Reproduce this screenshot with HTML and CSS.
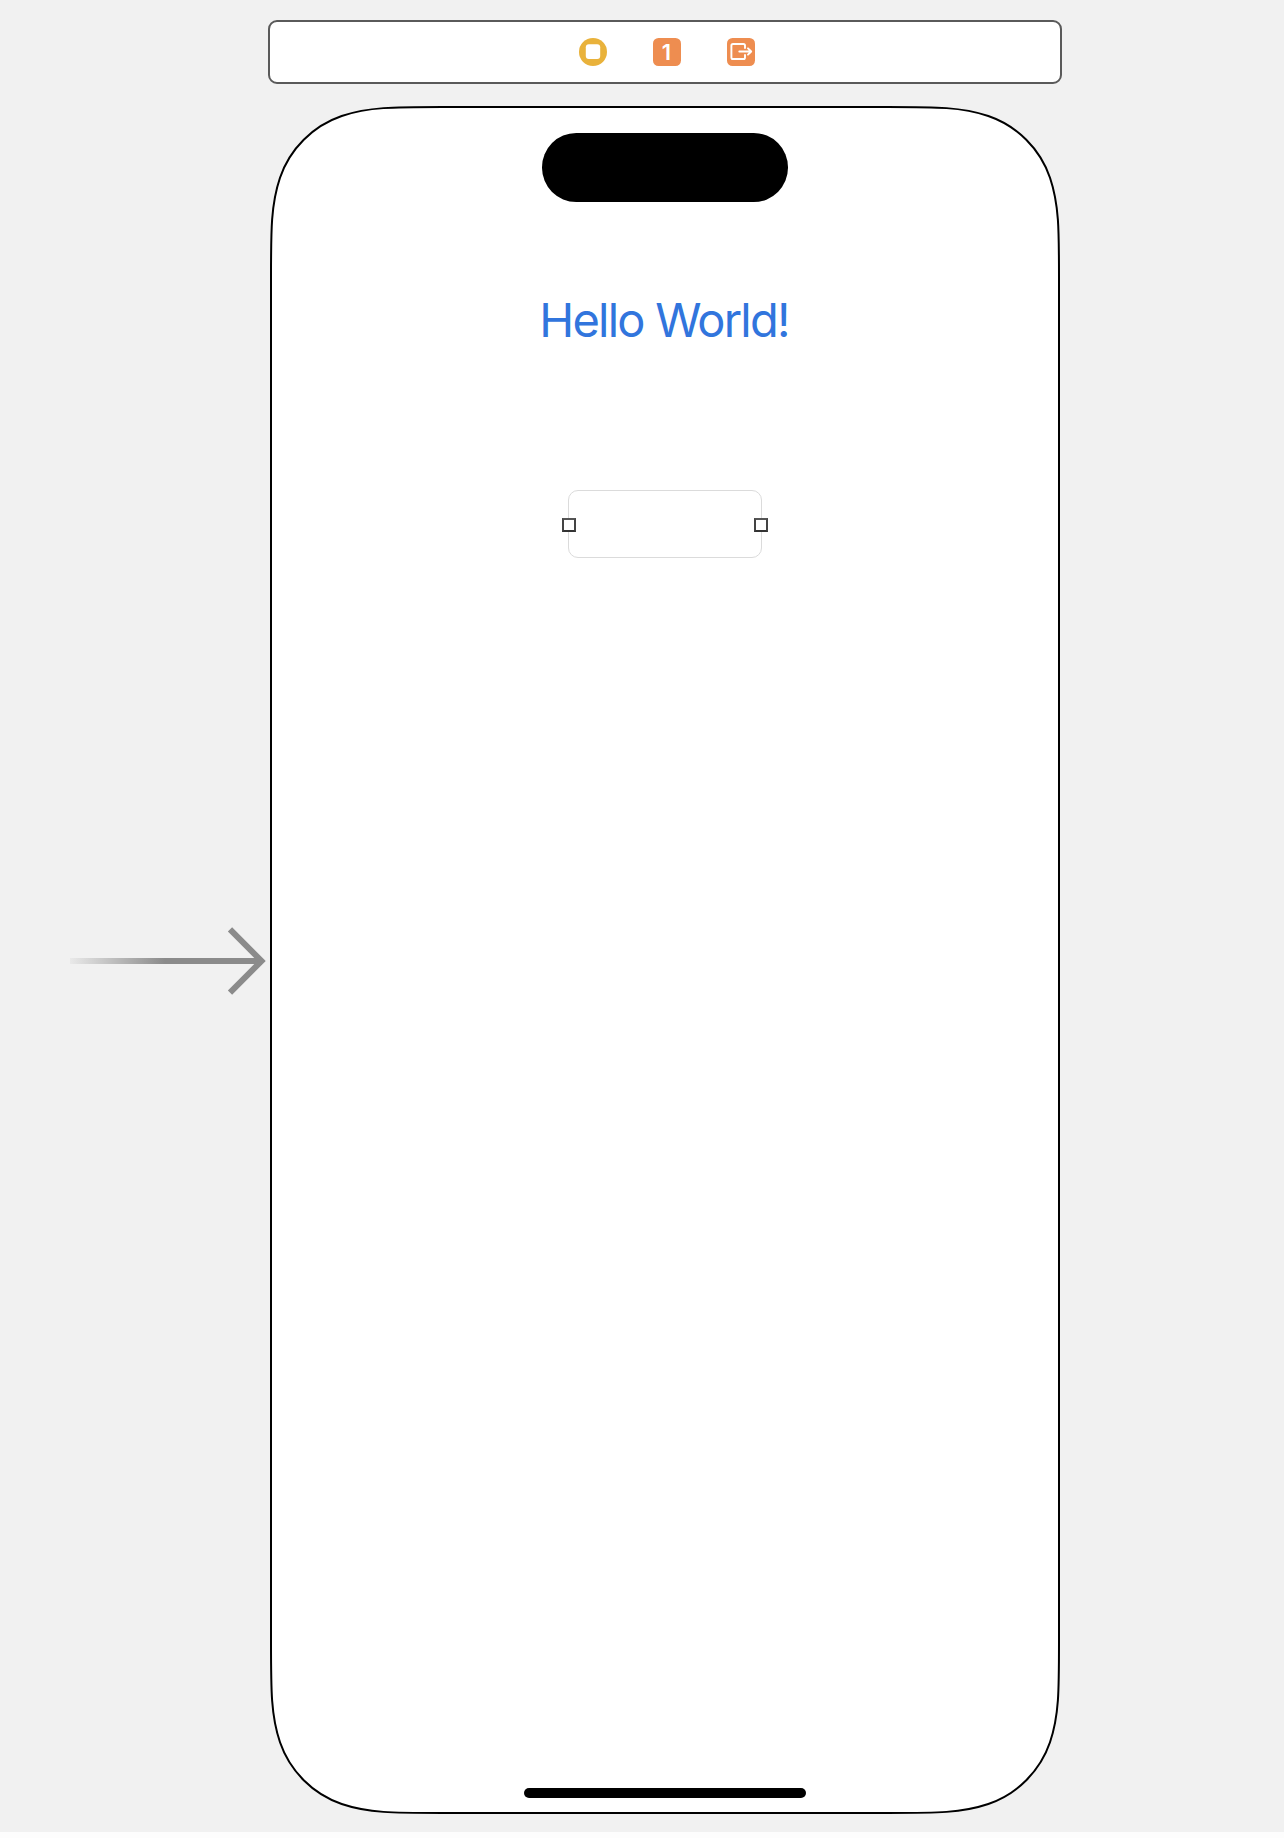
FILE: index.html
```html
<!DOCTYPE html>
<html lang="en">
<head>
<meta charset="utf-8">
<title>Main.storyboard</title>
<link rel="stylesheet" href="styles.css">
</head>
<body>
<main class="canvas">
  <header class="scene-dock">
    <svg class="dock-icon" viewBox="0 0 28 28"><circle cx="14" cy="14" r="14" fill="#e9b23b"/><rect x="6.8" y="6.3" width="14.4" height="14.8" rx="3" fill="#fff"/></svg>
    <span class="dock-icon responder">1</span>
    <svg class="dock-icon" viewBox="0 0 28 28"><rect width="28" height="28" rx="5.5" fill="#ee8d50"/><g fill="none" stroke="#fff" stroke-width="1.9" stroke-linecap="round" stroke-linejoin="round"><path d="M18 10V7.6Q18 6 16.400 6H6Q4.400 6 4.400 7.600V19.400Q4.400 21 6 21H16.400Q18 21 18 19.400V17"/><path d="M12.300 13.500H24M21 10.300L24.200 13.500L21 16.700"/></g></svg>
  </header>
  <svg class="entry-arrow" viewBox="0 0 200 70">
    <defs><linearGradient id="fade" gradientUnits="userSpaceOnUse" x1="0" y1="0" x2="95" y2="0"><stop offset="0" stop-color="#e9e9e9"/><stop offset="1" stop-color="#8b8b8b"/></linearGradient></defs>
    <rect x="0" y="32" width="192" height="6" fill="url(#fade)"/>
    <path d="M160 3.300L191.500 35L160 66.700" fill="none" stroke="#8b8b8b" stroke-width="6"/>
  </svg>
  <section class="phone">
    <svg class="phone-shape" viewBox="-1 -1 790 1708">
      <path fill="#fff" stroke="#000" stroke-width="2" d="M171 0H617C666 0 690.700 0 717.300 9C746.200 18.900 769.100 41.800 779 70.700C788 97.300 788 122 788 171V1535C788 1584 788 1608.700 779 1635.300C769.100 1664.200 746.200 1687.100 717.300 1697C690.700 1706 666 1706 617 1706H171C122 1706 97.300 1706 70.700 1697C41.800 1687.100 18.900 1664.200 9 1635.300C0 1608.700 0 1584 0 1535V171C0 122 0 97.300 9 70.700C18.900 41.800 41.800 18.900 70.700 9C97.300 0 122 0 171 0Z"/>
    </svg>
    <div class="island"></div>
    <h1 class="title">Hello World!</h1>
    <div class="field"><i class="handle"></i><i class="handle"></i></div>
    <div class="home-bar"></div>
  </section>
</main>
</body>
</html>
```
FILE: styles.css
```css
* { box-sizing: border-box; }

body {
  margin: 0;
  background: #fdfdfd;
  font-family: Inter, "Liberation Sans", sans-serif;
}

.canvas {
  display: grid;
  grid-template-columns: 270px 790px;
  grid-template-rows: 64px 1708px;
  row-gap: 22px;
  align-content: start;
  isolation: isolate;
  height: 1832px;
  padding-top: 20px;
  background: #f1f1f1;
}

.scene-dock {
  grid-column: 2;
  display: flex;
  align-items: center;
  justify-content: center;
  gap: 46px;
  width: 794px;
  margin-left: -2px;
  padding-left: 4px;
  border: 2px solid #5a5a5a;
  border-radius: 9px;
  background: #fff;
}

.dock-icon {
  display: block;
  width: 28px;
  height: 28px;
}

.responder {
  padding-right: 1px;
  border-radius: 5.5px;
  background: #ee8d50;
  color: #fff;
  font-size: 22px;
  font-weight: 600;
  line-height: 28px;
  text-align: center;
}

.entry-arrow {
  grid-column: 1;
  grid-row: 2;
  width: 200px;
  height: 70px;
  margin: 820px 0 0 70px;
}

.phone {
  grid-column: 2;
  grid-row: 2;
  position: relative;
  display: flex;
  flex-direction: column;
  align-items: center;
  padding: 27px 0 16px;
}

.phone-shape {
  position: absolute;
  inset: 0;
  z-index: -1;
  width: 790px;
  height: 1708px;
}

.island {
  width: 245.400px;
  height: 68.500px;
  border-radius: 34.250px;
  background: #000;
}

.title {
  margin: 88.500px 2px 0 0;
  color: #3175dd;
  font-size: 47px;
  font-weight: 400;
  line-height: 60px;
  letter-spacing: -1.780px;
  white-space: nowrap;
}

.field {
  display: flex;
  align-items: center;
  justify-content: space-between;
  width: 194px;
  height: 68px;
  margin-top: 140px;
  padding-top: 2px;
  border: 1px solid #dbdbdb;
  border-radius: 10px;
}

.handle {
  width: 14px;
  height: 14px;
  margin: 0 -7px;
  border: 2px solid;
  border-color: #555 #444 #333;
  background: #fff;
}

.home-bar {
  width: 282px;
  height: 10px;
  margin-top: auto;
  border-radius: 5px;
  background: #000;
}
```
